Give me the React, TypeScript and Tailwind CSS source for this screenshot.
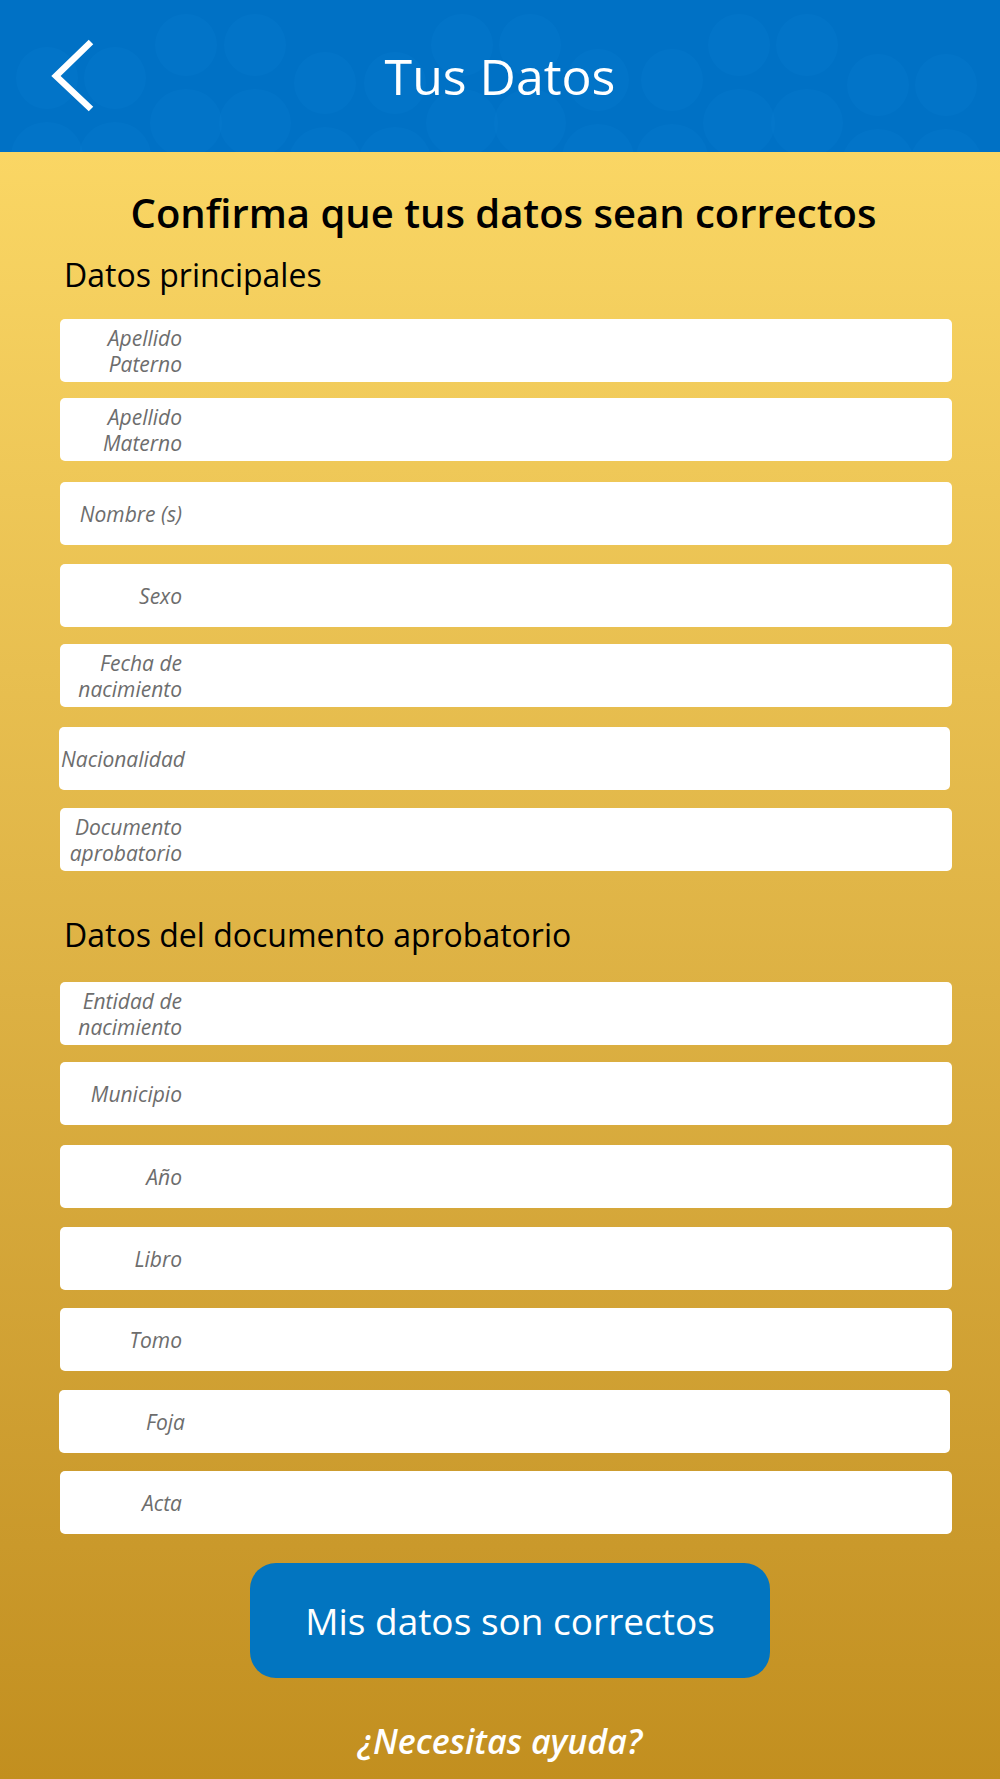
import React from 'react';

type Field = { label: string; gap: string; shift?: boolean };

const PRINCIPALES: Field[] = [
    { label: 'Apellido Paterno', gap: 'mt-0' },
    { label: 'Apellido Materno', gap: 'mt-[16px]' },
    { label: 'Nombre (s)', gap: 'mt-[21px]' },
    { label: 'Sexo', gap: 'mt-[19px]' },
    { label: 'Fecha de nacimiento', gap: 'mt-[17px]' },
    { label: 'Nacionalidad', gap: 'mt-[20px]', shift: true },
    { label: 'Documento aprobatorio', gap: 'mt-[18px]' },
];

const DOCUMENTO: Field[] = [
    { label: 'Entidad de nacimiento', gap: 'mt-0' },
    { label: 'Municipio', gap: 'mt-[17px]' },
    { label: 'Año', gap: 'mt-[20px]' },
    { label: 'Libro', gap: 'mt-[19px]' },
    { label: 'Tomo', gap: 'mt-[18px]' },
    { label: 'Foja', gap: 'mt-[19px]', shift: true },
    { label: 'Acta', gap: 'mt-[18px]' },
];

// faint "people" heads in the header background
const HEADS: [number, number][] = [
    [47, 78], [115, 78], [186, 45], [255, 45], [325, 83], [395, 83],
    [462, 45], [530, 45], [598, 80], [672, 80], [739, 45], [807, 45],
    [878, 85], [946, 85],
];

function HeaderPattern() {
    return (
        <svg className="absolute inset-0" width="1000" height="152" viewBox="0 0 1000 152">
            {HEADS.map(([x, y], i) => (
                <g key={i} fill="#0a7fd2" opacity="0.25">
                    <circle cx={x} cy={y} r="31" />
                    <ellipse cx={x} cy={y + 78} rx="36" ry="34" />
                </g>
            ))}
        </svg>
    );
}

function InputRow({ field }: { field: Field }) {
    return (
        <div
            className={`${field.gap} ${field.shift ? 'ml-[-1px] w-[891px]' : 'w-[892px]'} h-[63px] bg-white rounded-[5px] flex items-center`}
        >
            <div
                className={`${field.shift ? 'w-[126px]' : 'w-[122px]'} shrink-0 text-right italic text-[21px] leading-[26px] text-[#6d6d6d]`}
            >
                {field.label}
            </div>
        </div>
    );
}

export default function App() {
    return (
        <div className="w-[1000px] min-h-[1779px] font-['Open_Sans',sans-serif] bg-gradient-to-b from-[#ffdd6a] to-[#c28f1f] flex flex-col">
            <header className="relative h-[152px] bg-[#0071c5] overflow-hidden flex items-center justify-center">
                <HeaderPattern />
                <svg className="absolute left-0 top-0" width="120" height="152" viewBox="0 0 120 152">
                    <polyline points="91,42 56,76 91,109" fill="none" stroke="#ffffff" strokeWidth="6.5" strokeLinecap="butt" strokeLinejoin="miter" />
                </svg>
                <h1 className="relative text-white text-[50px] leading-[60px] font-normal">Tus Datos</h1>
            </header>

            <main className="flex-1 flex flex-col">
                <h2 className="mt-[37px] pl-[7px] text-center text-[40px] leading-[48px] font-semibold text-black">
                    Confirma que tus datos sean correctos
                </h2>

                <div className="pl-[60px] pr-[48px] flex flex-col">
                    <h3 className="mt-[18px] pl-[4px] text-[32px] leading-[40px] text-black">Datos principales</h3>
                    <div className="mt-[24px] flex flex-col">
                        {PRINCIPALES.map(f => (
                            <InputRow key={f.label} field={f} />
                        ))}
                    </div>

                    <h3 className="mt-[44px] pl-[4px] text-[32px] leading-[40px] text-black">Datos del documento aprobatorio</h3>
                    <div className="mt-[27px] flex flex-col">
                        {DOCUMENTO.map(f => (
                            <InputRow key={f.label} field={f} />
                        ))}
                    </div>
                </div>

                <button className="mt-[29px] ml-[250px] w-[520px] h-[115px] rounded-[26px] bg-[#0275c0] text-white text-[37px] leading-[48px]">
                    Mis datos son correctos
                </button>

                <p className="mt-[43px] mb-[18px] text-center text-white italic font-semibold text-[34px] leading-[40px]">
                    ¿Necesitas ayuda?
                </p>
            </main>
            <div className="h-px bg-[#d8b85c]" />
        </div>
    );
}
